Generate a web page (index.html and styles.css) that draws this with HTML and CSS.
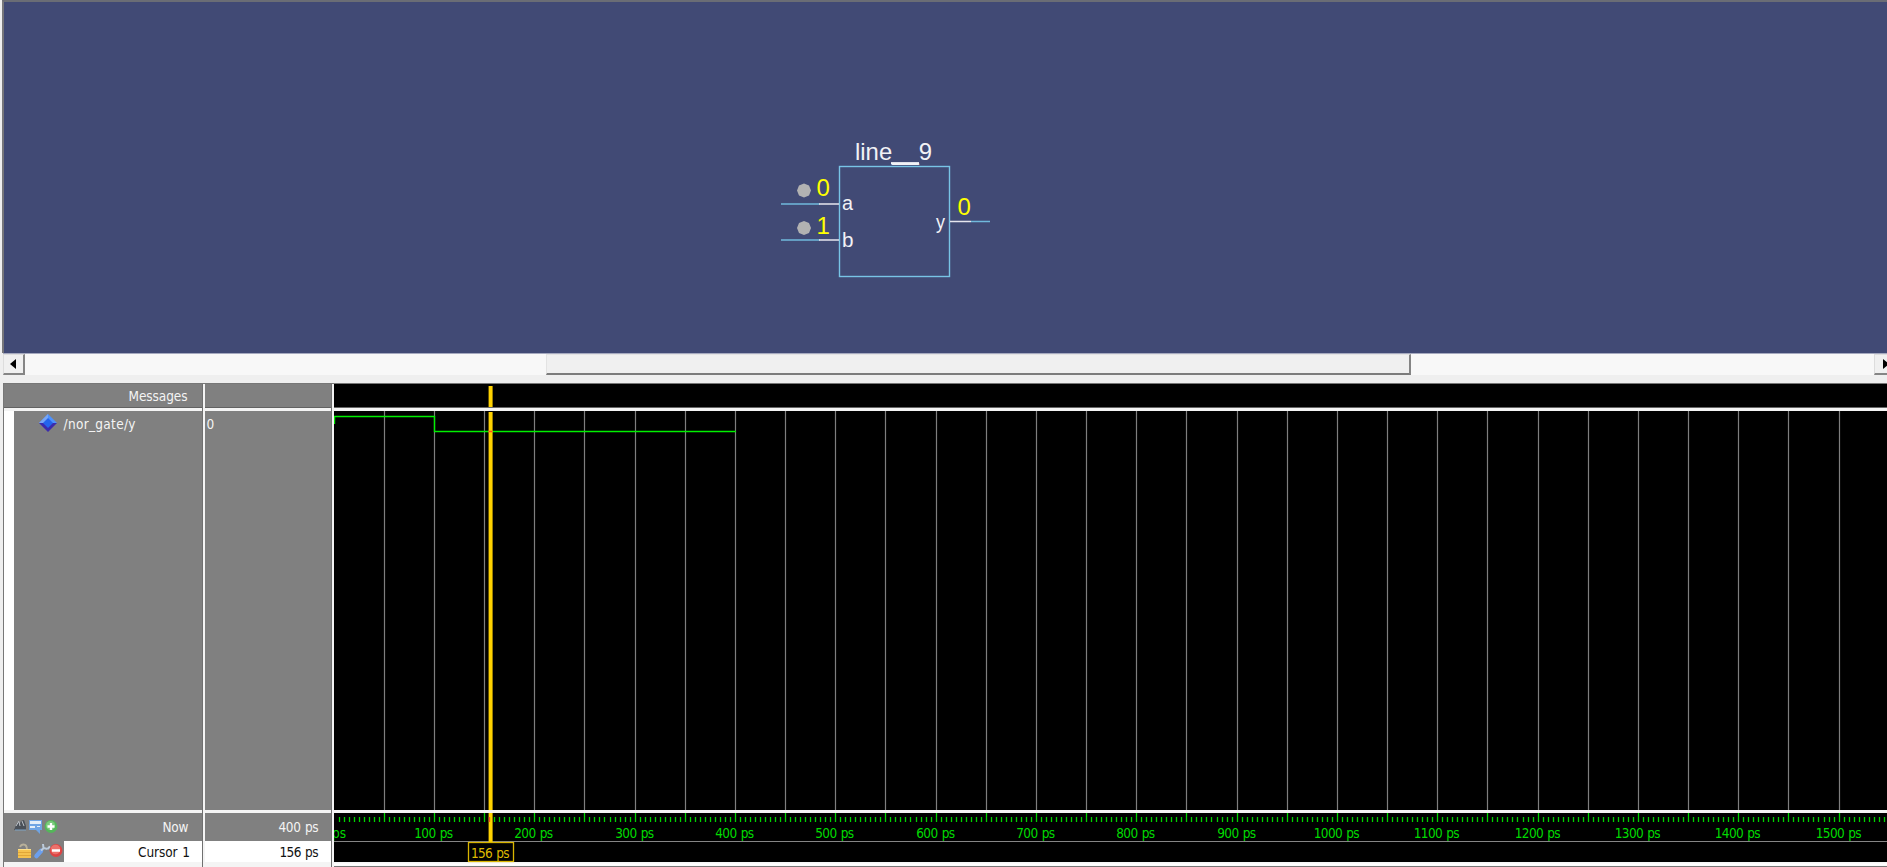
FILE: index.html
```html
<!DOCTYPE html>
<html lang="en">
<head>
<meta charset="utf-8">
<title>Wave</title>
<link rel="stylesheet" href="styles.css">
</head>
<body>
<main class="app">
  <section class="schematic">
    <svg class="gate" width="230" height="155" viewBox="770 130 230 155">
      <rect class="box" x="839.5" y="166.5" width="110" height="110"/>
      <path class="wire" d="M781 204H820M781 240H820M971 221.500H990"/>
      <path class="wire-end" d="M819 204H839M819 240H839M950 221.500H971"/>
      <g class="dots">
        <path d="M804 183.500L809 185.500L811 190.500L809 195.500L804 197.500L799 195.500L797 190.500L799 185.500Z"/>
        <path d="M804 221L809 223L811 228L809 233L804 235L799 233L797 228L799 223Z"/>
      </g>
      <g class="label">
        <text x="855" y="160" font-size="24" textLength="77" lengthAdjust="spacingAndGlyphs">line__9</text>
        <text x="842" y="210" font-size="20.500" textLength="11" lengthAdjust="spacingAndGlyphs">a</text>
        <text x="842" y="247" font-size="20.500" textLength="11.500" lengthAdjust="spacingAndGlyphs">b</text>
        <text x="936" y="228.500" font-size="20.500" textLength="9" lengthAdjust="spacingAndGlyphs">y</text>
      </g>
      <path class="underscore" d="M891 163.200H919"/>
      <g class="value"><text x="816.500" y="195.500">0</text><text x="816.500" y="233.500">1</text><text x="957.500" y="214.500">0</text></g>
    </svg>
  </section>
  <div class="scrollbar">
    <span class="arrow"><svg width="6" height="10"><path d="M6 0V10L0 5Z"/></svg></span>
    <span class="track-left"></span><span class="thumb"></span><span class="track-right"></span>
    <span class="arrow arrow-right"><svg width="6" height="10"><path d="M0 0V10L6 5Z"/></svg></span>
  </div>
  <section class="wave">
    <div class="names">
      <div class="head"><svg width="198" height="24"><text x="124.500" y="17" textLength="59">Messages</text></svg></div>
      <div class="body signal">
        <svg width="184" height="30">
          <path fill="#4d91ff" d="M34 3L43 12H25Z"/><path fill="#78a6f5" d="M34 3V12H25Z"/><path fill="#3b2bad" d="M25 12H43L34 21Z"/><path fill="#2464ed" d="M34 7L39 12L34 17L29 12Z"/>
          <text x="49.500" y="17.500" textLength="72">/nor_gate/y</text>
        </svg>
      </div>
      <div class="now">
        <svg width="198" height="28">
          <path fill="#4a5058" d="M10 17L12 12L14 9L16 11L17 8L20 7L22 13V17Z"/>
          <path d="M12 13L15 8M16 13L15 9M18 8L20 13" stroke="#bdc2c8" fill="none"/>
          <path d="M11 17H22" stroke="#7fa3c4"/>
          <path fill="#6fa4e4" d="M25 7H38V17H36V21L32 17H25Z"/><path fill="#e3edf8" d="M26 8H37V11H26ZM26 13H31V15H26ZM33 13H36V14H33Z"/>
          <circle cx="47" cy="13.500" r="6.400" fill="#54b65a"/><circle cx="46.500" cy="12.500" r="4.600" fill="#7bcb7b"/><path d="M47 10V17M43.500 13.500H50.500" stroke="#fff" stroke-width="2.300"/>
          <text x="158.500" y="18.500" textLength="26">Now</text>
        </svg>
      </div>
      <div class="cursor">
        <svg class="tools" width="60" height="21">
          <path d="M16 6Q17 3.500 19.500 3.500Q23 3.500 23 9" fill="none" stroke="#b8b09a" stroke-width="1.800"/>
          <rect x="14" y="8" width="13" height="9" fill="#f4c24f"/><path d="M14 11.500H27M14 14.500H27" stroke="#e0a638"/><path d="M14 8.500H27" stroke="#ffe08a"/>
          <path d="M32.500 15L37 10" stroke="#6b9fee" stroke-width="4.500" stroke-linecap="round"/>
          <path d="M37 9.500L40.500 6.500M39 3L39.500 7L43.500 8M43.500 8L46 5.500" fill="none" stroke="#bccbdc" stroke-width="2"/>
          <circle cx="52" cy="9.500" r="6.400" fill="#dd4444"/><circle cx="51.500" cy="8.500" r="4.800" fill="#ec716b"/><path d="M48 9.500H56" stroke="#fff" stroke-width="2.500"/>
        </svg>
        <svg class="name" width="138" height="21"><text x="74" y="15.500" textLength="52">Cursor 1</text></svg>
      </div>
    </div>
    <div class="values">
      <div class="head"></div>
      <div class="body"><svg width="126" height="30"><text x="1.500" y="17.500">0</text></svg></div>
      <div class="now"><svg width="126" height="28"><text x="73.500" y="18.500" textLength="40">400 ps</text></svg></div>
      <div class="cursor white"><svg width="126" height="21"><text x="74.500" y="15.500" textLength="39">156 ps</text></svg></div>
    </div>
    <div class="plot">
      <svg id="plot" width="1553" height="483" viewBox="334 384 1553 483"></svg>
    </div>
  </section>
</main>
<script src="plot.js"></script>
</body>
</html>
```
FILE: styles.css
```css
* { box-sizing: border-box; }
body { margin: 0; background: #f0f0f0; font-family: "DejaVu Sans Condensed", "DejaVu Sans", sans-serif; font-stretch: condensed; font-size: 13.5px; word-spacing: 1px; overflow: hidden; }
svg { display: block; }
.app { width: 1887px; height: 867px; padding-left: 2px; display: flex; flex-direction: column; background: #efefef; }
.schematic { height: 353px; padding: 128px 0 0 766px; background: #414a75; border-top: 2px solid #6a6d75; border-left: 2px solid #77777b; }
.gate { font-family: "Liberation Sans", Arial, sans-serif; }
.box { fill: none; stroke: #78c4e6; stroke-width: 1.4; }
.wire { stroke: #70b9dc; stroke-width: 1.5; }
.wire-end { stroke: #e6e6ee; stroke-width: 1.5; }
.dots { fill: #b2b2b2; }
.label { fill: #f2f2f6; }
.underscore { stroke: #f2f2f6; stroke-width: 2.2; }
.value { fill: #ffff00; font-size: 24px; }
.scrollbar { height: 22px; margin-left: 1px; display: flex; background: #f8f8f8; border-top: 1px solid #a5a9bf; }
.arrow { width: 22px; height: 21px; display: flex; align-items: center; padding-left: 6px; background: #f0f0f0; border: 1px solid #ddd; border-right: 2px solid #858585; border-bottom: 2px solid #858585; }
.arrow-right { width: 13px; border-right: 0; padding-left: 8px; overflow: hidden; }
.arrow svg { flex: none; }
.track-left { width: 521px; }
.thumb { width: 865px; height: 21px; background: #f0f0f0; border: 1px solid #e3e3e3; border-right: 2px solid #858585; border-bottom: 2px solid #7c7c7c; }
.track-right { flex: 1; }
.wave { margin: 8px 0 0 1px; height: 484px; display: flex; border-top: 1px solid #777; border-left: 1px solid #777; background: #f4f4f4; }
.names { width: 198px; margin-right: 3px; fill: #f4f4f4; }
.values { width: 126px; margin-right: 3px; fill: #f4f4f4; }
.names, .values { display: flex; flex-direction: column; background: #f4f4f4; box-shadow: 1px 0 #707070; }
.head { height: 24px; background: #808080; margin-bottom: 3px; box-shadow: inset 0 -1px #626262; }
.body { height: 399px; background: #808080; margin-bottom: 3px; }
.signal { border-left: 10px solid #fff; }
.now { height: 28px; background: #808080; }
.cursor { height: 21px; display: flex; background: #808080; }
.name, .white { background: #fff; fill: #111; }
.plot { flex: 1; }
.bg { fill: #000; }
.grid { stroke: #7e7e7e; stroke-width: 1.2; }
.tick { stroke: #00d000; stroke-width: 1.3; }
.ruler { fill: #00da00; }
.trace { fill: none; stroke: #00f000; stroke-width: 1.4; }
.cursor-line { fill: #ffd200; }
.rule { stroke: #858585; }
.tag { fill: #000; stroke: #d9b500; stroke-width: 1.3; }
.tag-text { fill: #dfba00; }
.cross { stroke: #ff4b20; stroke-width: 1.3; }
```
FILE: plot.js
```javascript
const origin = 334.1;
const perPs = 1.0033;
const x = ps => Math.floor(origin + ps * perPs) + 0.5;
let out = '<rect class="bg" x="334" y="384" width="1553" height="24"/>' +
  '<rect class="bg" x="334" y="411" width="1553" height="399"/>' +
  '<rect class="bg" x="334" y="813" width="1553" height="49"/>' +
  '<path d="M334 407.5H1887" stroke="#666"/>' +
  '<path d="M334 864.500H1887" stroke="#fff" stroke-width="2"/><path d="M334 866.500H1887" stroke="#777"/>';
for (let ps = 50; ps < 1550; ps += 50) out += `<path class="grid" d="M${x(ps)} 411V810"/>`;
for (let ps = 5; ps < 1548; ps += 5) out += `<path class="tick" d="M${x(ps)} ${ps % 50 ? 817 : 813}V822"/>`;
out += '<text class="ruler" x="332" y="838">ps</text>';
for (let ps = 100; ps <= 1500; ps += 100) {
  const width = ps < 1000 ? 39 : 46;
  out += `<text class="ruler" x="${x(ps) - width / 2 - 0.8}" y="838" textLength="${width}">${ps} ps</text>`;
}
out += '<path class="rule" d="M334 841.500H1887"/>' +
  '<path class="trace" d="M334.500 424V416.500H434.500V431.500H736"/>' +
  '<path class="cursor-line" d="M488.600 386H492.600V407H488.600ZM488.600 412H492.600V810H488.600ZM488.600 813H492.600V842H488.600Z"/>' +
  '<path class="cross" d="M488.500 431.500H492.500M489.500 817V822"/>' +
  '<rect class="tag" x="468.500" y="842.500" width="45" height="19"/>' +
  '<text class="tag-text" x="471" y="858" textLength="38.500">156 ps</text>';
document.getElementById('plot').innerHTML = out;
```
